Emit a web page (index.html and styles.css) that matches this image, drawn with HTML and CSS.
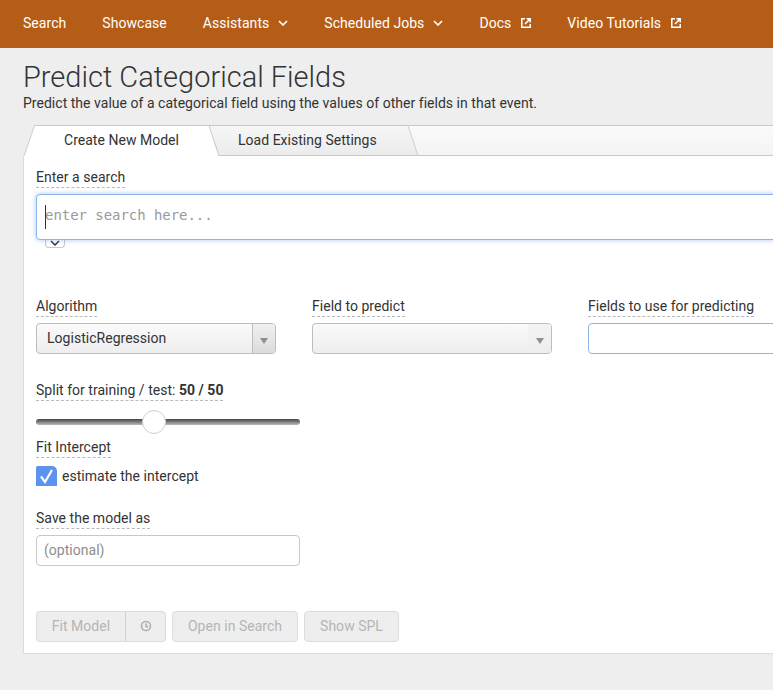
FILE: index.html
```html
<!DOCTYPE html>
<html lang="en">
<head>
<meta charset="utf-8">
<title>Predict Categorical Fields</title>
<link rel="stylesheet" href="styles.css">
</head>
<body>
<nav class="nav">
  <a class="nav-item">Search</a>
  <a class="nav-item">Showcase</a>
  <a class="nav-item">Assistants <svg class="chev" viewBox="0 0 10 6"><path d="M1 1l4 4 4-4"/></svg></a>
  <a class="nav-item">Scheduled Jobs <svg class="chev" viewBox="0 0 10 6"><path d="M1 1l4 4 4-4"/></svg></a>
  <a class="nav-item">Docs <svg class="ext" viewBox="0 0 10 10"><path d="M4 .75H.75v8.5h8.5V6M5.5.75h3.75V4.5M9 1L4 6"/></svg></a>
  <a class="nav-item">Video Tutorials <svg class="ext" viewBox="0 0 10 10"><path d="M4 .75H.75v8.5h8.5V6M5.5.75h3.75V4.5M9 1L4 6"/></svg></a>
</nav>
<main class="main">
  <h1 class="title">Predict Categorical Fields</h1>
  <p class="subtitle">Predict the value of a categorical field using the values of other fields in that event.</p>
  <section class="panel">
    <div class="tabs">
      <div class="tab tab-active">
        <svg class="tab-shape" viewBox="0 0 197 31" preserveAspectRatio="none"><path class="fill-white" d="M1 31L11.5 .5H186L196 31z"/><path class="line-light" d="M1 31L11.5 .5"/><path class="line" d="M11.5 .5H186L196 31"/></svg>
        <span class="tab-text">Create New Model</span>
      </div>
      <div class="tab tab-second">
        <svg class="tab-shape" viewBox="0 0 210 31" preserveAspectRatio="none">
          <defs><linearGradient id="tabfill" x1="0" y1="0" x2="0" y2="1"><stop offset="0" stop-color="#f6f6f6"/><stop offset="1" stop-color="#ececec"/></linearGradient></defs>
          <path fill="url(#tabfill)" d="M0 .5H199L209 30.5H10z"/>
          <path class="line" d="M0 .5H199M10 30.5H209.5"/><path class="line-light" d="M199 .5L209 30.5"/>
        </svg>
        <span class="tab-text">Load Existing Settings</span>
      </div>
      <div class="tab-rest"></div>
    </div>
    <div class="body">
      <div class="field-search">
        <span class="label">Enter a search</span>
        <div class="search-wrap">
          <div class="search-box"><span class="caret"></span><span class="placeholder">enter search here...</span></div>
          <div class="toggle"><svg viewBox="0 0 10 6"><path d="M1 1l4 4 4-4"/></svg></div>
        </div>
      </div>
      <div class="row">
        <div class="col">
          <span class="label">Algorithm</span>
          <div class="select">
            <span class="select-text">LogisticRegression</span>
            <span class="select-btn"><span class="arrow"></span></span>
          </div>
        </div>
        <div class="col">
          <span class="label">Field to predict</span>
          <div class="select select-empty">
            <span class="select-text"></span>
            <span class="select-btn"><span class="arrow"></span></span>
          </div>
        </div>
        <div class="col">
          <span class="label">Fields to use for predicting</span>
          <div class="multi"></div>
        </div>
      </div>
      <div class="field-split">
        <span class="label">Split for training / test: <b>50 / 50</b></span>
        <div class="slider"><span class="thumb"></span></div>
      </div>
      <div class="field-fit">
        <span class="label">Fit Intercept</span>
        <div class="check-row">
          <span class="check"><svg viewBox="0 0 21 20"><path d="M5 10.5l4 5.5 7-12"/></svg></span>
          <span>estimate the intercept</span>
        </div>
      </div>
      <div class="field-save">
        <span class="label">Save the model as</span>
        <div class="text-input">(optional)</div>
      </div>
      <div class="actions">
        <div class="btn-group">
          <span class="btn btn-fit">Fit Model</span>
          <span class="btn btn-clock"><svg viewBox="0 0 12 12"><circle cx="6" cy="6" r="4.5"/><path d="M6 3.4V6.3L8 7.3"/></svg></span>
        </div>
        <span class="btn btn-single btn-open">Open in Search</span>
        <span class="btn btn-single btn-spl">Show SPL</span>
      </div>
    </div>
  </section>
</main>
</body>
</html>
```
FILE: styles.css
```css
* { box-sizing: border-box; }
html, body { margin: 0; height: 100%; }
body {
  width: 773px;
  height: 690px;
  overflow: hidden;
  background: #eeeeee;
  color: #333;
  font-family: Roboto, "Liberation Sans", sans-serif;
  font-size: 14px;
  line-height: 20px;
  letter-spacing: .025px;
}
.nav {
  display: flex;
  align-items: center;
  gap: 36px;
  height: 48px;
  padding: 0 0 2px 23px;
  background: #b55d17;
  color: #fff;
  letter-spacing: .05px;
}
.nav-item { display: flex; align-items: center; gap: 9px; white-space: nowrap; }
.chev { width: 10px; height: 6px; fill: none; stroke: #fff; stroke-width: 1.7; }
.ext { width: 10px; height: 10px; fill: none; stroke: #fff; stroke-width: 1.6; margin-left: 1px; }
.main { padding: 13px 0 0 23px; }
.title {
  margin: 0;
  height: 32px;
  font-size: 29px;
  font-weight: 300;
  line-height: 33px;
  letter-spacing: 0;
  color: #333;
}
.subtitle { margin: 0; line-height: 20px; height: 32px; }
.panel {
  width: 800px;
  height: 529px;
  background: #fff;
  border-left: 1px solid #dcdcdc;
  border-bottom: 1px solid #dcdcdc;
}
.tabs {
  display: flex;
  height: 31px;
  margin-left: -1px;
  background: #eeeeee;
}
.tab { position: relative; display: flex; align-items: center; height: 31px; padding-bottom: 2px; }
.tab-active { width: 197px; justify-content: center; z-index: 1; flex: none; }
.tab-second { width: 210px; flex: none; margin-left: -11px; padding-left: 29px; }
.tab-rest {
  flex: 1;
  margin-left: -11px;
  background: linear-gradient(#fafafa, #f4f4f4);
  border-top: 1px solid #c8c8c8;
  border-bottom: 1px solid #c8c8c8;
}
.tab-shape { position: absolute; inset: 0; width: 100%; height: 100%; }
.fill-white { fill: #fff; }
.line { fill: none; stroke: #c8c8c8; stroke-width: 1; }
.line-light { fill: none; stroke: #d6d6d6; stroke-width: 1.2; }
.tab-text { position: relative; }
.body { padding: 11px 0 0 12px; }
.label {
  display: inline-block;
  height: 21px;
  line-height: 20px;
  border-bottom: 1px dashed #b9b9b9;
}
.search-wrap { position: relative; margin-top: 6px; height: 102px; }
.search-box {
  display: flex;
  align-items: center;
  position: relative;
  height: 46px;
  padding: 0 0 4px 8px;
  background: #fff;
  border: 1px solid #8db4ec;
  border-radius: 4px;
  box-shadow: 0 0 5px rgba(82, 140, 230, .5);
  z-index: 1;
}
.caret { position: absolute; left: 8px; top: 10px; width: 1px; height: 24px; background: #333; }
.placeholder { font-family: "DejaVu Sans Mono", monospace; font-size: 14px; letter-spacing: -.05px; color: #9a9a9a; }
.toggle {
  position: absolute;
  left: 9px;
  top: 44px;
  width: 20px;
  height: 10px;
  display: flex;
  justify-content: center;
  align-items: center;
  padding-top: 1px;
  background: #fff;
  border: 1px solid #c8c8c8;
  border-top: 0;
  border-radius: 0 0 4px 4px;
}
.toggle svg { width: 10px; height: 6px; fill: none; stroke: #333; stroke-width: 1.5; }
.row { display: flex; gap: 36px; }
.col { width: 240px; flex: none; }
.select {
  display: flex;
  height: 31px;
  margin-top: 6px;
  border: 1px solid #bdbdbd;
  border-radius: 4px;
  background: linear-gradient(#fafafa, #eeeeee);
  overflow: hidden;
}
.select-text { flex: 1; padding-left: 10px; line-height: 29px; }
.select-btn {
  width: 23px;
  display: flex;
  align-items: center;
  justify-content: center;
  border-left: 1px solid #bdbdbd;
  background: linear-gradient(#f0f0f0, #dcdcdc);
  padding-top: 4px;
}
.select-empty .select-btn { border-left: 0; background: linear-gradient(#f3f3f3, #eeeeee); }
.arrow { width: 0; height: 0; border-left: 4px solid transparent; border-right: 4px solid transparent; border-top: 6px solid #8f8f8f; }
.multi {
  height: 31px;
  margin-top: 6px;
  border: 1px solid #8db4ec;
  border-radius: 4px;
  background: #fff;
}
.field-split { margin-top: 26px; height: 57px; }
.slider {
  position: relative;
  width: 264px;
  height: 6px;
  margin-top: 18px;
  border-radius: 3px;
  background: linear-gradient(#444, #bbb);
}
.thumb {
  position: absolute;
  left: 106px;
  top: -9px;
  width: 24px;
  height: 24px;
  border-radius: 50%;
  background: #fff;
  border: 1px solid #cfcfcf;
}
.check-row { display: flex; align-items: center; gap: 5px; margin-top: 4px; height: 27px; }
.check { width: 21px; height: 20px; background: #5b93ee; border-radius: 2px 5px 0 0; display: block; }
.check svg { display: block; width: 21px; height: 20px; fill: none; stroke: #fff; stroke-width: 2.2; }
.field-save { margin-top: 19px; }
.text-input {
  width: 264px;
  height: 31px;
  margin-top: 6px;
  padding-left: 7px;
  line-height: 29px;
  color: #8e8e8e;
  border: 1px solid #c8c8c8;
  border-radius: 4px;
  background: #fff;
}
.actions { display: flex; gap: 6px; margin-top: 45px; }
.btn-group { display: flex; }
.btn {
  display: flex;
  align-items: center;
  justify-content: center;
  height: 31px;
  padding-bottom: 1px;
  color: #b5b5b5;
  background: #eeeeee;
  border: 1px solid #dcdcdc;
}
.btn-fit { width: 90px; border-radius: 4px 0 0 4px; border-right: 1px solid #cfcfcf; }
.btn-clock { width: 40px; border-left: 0; border-radius: 0 4px 4px 0; }
.btn-clock svg { width: 12px; height: 12px; fill: none; stroke: #b0b0b0; stroke-width: 1.6; }
.btn-single { border-radius: 4px; }
.btn-open { width: 126px; }
.btn-spl { width: 95px; }
b { font-weight: 700; }
```
